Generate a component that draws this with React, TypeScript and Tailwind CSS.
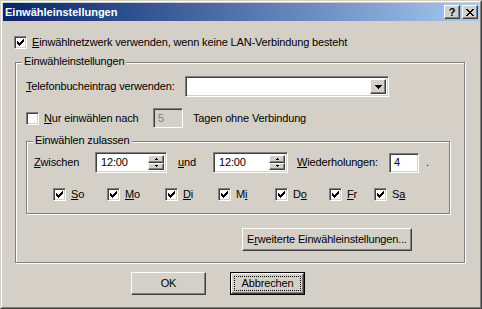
import React from 'react';

const raised =
  'border border-t-white border-l-white border-r-[#404040] border-b-[#404040] shadow-[inset_-1px_-1px_0_#808080]';
const sunken =
  'border border-t-[#808080] border-l-[#808080] border-r-white border-b-white shadow-[inset_1px_1px_0_#404040,inset_-1px_-1px_0_#d4d0c8]';
const etched = 'relative border border-[#808080] shadow-[inset_1px_1px_0_#fff,1px_1px_0_#fff]';

function Check({ checked }: { checked?: boolean }) {
  return (
    <span className={`w-[13px] h-[13px] shrink-0 bg-white flex items-center justify-center ${sunken}`}>
      {checked && (
        <svg width="7" height="7" viewBox="0 0 7 7" shapeRendering="crispEdges">
          <rect x="0" y="2" width="1" height="3" fill="#000" />
          <rect x="1" y="3" width="1" height="3" fill="#000" />
          <rect x="2" y="4" width="1" height="3" fill="#000" />
          <rect x="3" y="3" width="1" height="3" fill="#000" />
          <rect x="4" y="2" width="1" height="3" fill="#000" />
          <rect x="5" y="1" width="1" height="3" fill="#000" />
          <rect x="6" y="0" width="1" height="3" fill="#000" />
        </svg>
      )}
    </span>
  );
}

function Legend({ children }: { children: React.ReactNode }) {
  return (
    <span className="absolute left-[6px] -top-[8px] px-[2px] bg-[#d4d0c8] leading-[13px]">{children}</span>
  );
}

function SpinBox({ value, width }: { value: string; width: string }) {
  return (
    <div className={`${width} h-[21px] bg-white flex p-[2px] ${sunken}`}>
      <span className="flex-1 pl-[3px] flex items-center">{value}</span>
      <div className="w-[16px] flex flex-col">
        <div className={`h-[9px] bg-[#d4d0c8] flex items-center justify-center ${raised}`}>
          <svg width="3" height="2" viewBox="0 0 3 2" shapeRendering="crispEdges">
            <rect x="1" y="0" width="1" height="1" fill="#000" />
            <rect x="0" y="1" width="3" height="1" fill="#000" />
          </svg>
        </div>
        <div className={`h-[8px] bg-[#d4d0c8] flex items-center justify-center ${raised}`}>
          <svg width="3" height="2" viewBox="0 0 3 2" shapeRendering="crispEdges">
            <rect x="0" y="0" width="3" height="1" fill="#000" />
            <rect x="1" y="1" width="1" height="1" fill="#000" />
          </svg>
        </div>
      </div>
    </div>
  );
}

function Day({ label, width }: { label: React.ReactNode; width: string }) {
  return (
    <div className={`${width} flex items-center`}>
      <Check checked />
      <span className="ml-[5px]">{label}</span>
    </div>
  );
}

export default function App() {
  return (
    <div className="w-[482px] h-[309px] bg-[#d4d0c8] border border-t-[#d4d0c8] border-l-[#d4d0c8] border-r-[#404040] border-b-[#404040] text-[11px] leading-[13px] text-black font-['Liberation_Sans',Arial,sans-serif]">
      <div className="h-full border border-t-white border-l-white border-r-[#808080] border-b-[#808080] p-[1px] flex flex-col">
        {/* title bar */}
        <div className="h-[18px] shrink-0 bg-linear-to-r from-[#0a246a] to-[#a6caf0] flex items-center pl-[2px] pr-[1px]">
          <span className="flex-1 font-bold text-white text-[11px]">Einwähleinstellungen</span>
          <div className={`w-[16px] h-[14px] bg-[#d4d0c8] flex items-center justify-center ${raised}`}>
            <span className="font-bold text-[11px] leading-none">?</span>
          </div>
          <div className={`ml-[2px] w-[16px] h-[14px] bg-[#d4d0c8] flex items-center justify-center ${raised}`}>
            <svg width="8" height="7" viewBox="0 0 8 7" shapeRendering="crispEdges">
              <path d="M0 0h2v1h-2zM6 0h2v1h-2zM1 1h2v1h-2zM5 1h2v1h-2zM2 2h4v1h-4zM3 3h2v1h-2zM2 4h4v1h-4zM1 5h2v1h-2zM5 5h2v1h-2zM0 6h2v1h-2zM6 6h2v1h-2z" fill="#000" />
            </svg>
          </div>
        </div>

        {/* body */}
        <div className="flex flex-col tracking-[-0.15px]">
          <div className="mt-[15px] ml-[11px] h-[13px] flex items-center">
            <Check checked />
            <span className="ml-[5px]">
              <u>E</u>inwählnetzwerk verwenden, wenn keine LAN-Verbindung besteht
            </span>
          </div>

          <div className={`mt-[13px] ml-[12px] w-[450px] h-[201px] ${etched}`}>
            <Legend>Einwähleinstellungen</Legend>
            <div className="flex flex-col pl-[10px]">
              <div className="mt-[13px] h-[21px] flex items-center">
                <span className="w-[159px]">
                  <u>T</u>elefonbucheintrag verwenden:
                </span>
                <div className={`w-[204px] h-[21px] bg-white flex justify-end p-[2px] ${sunken}`}>
                  <div className={`w-[16px] h-full bg-[#d4d0c8] flex items-center justify-center ${raised}`}>
                    <svg width="7" height="4" viewBox="0 0 7 4" shapeRendering="crispEdges">
                      <path d="M0 0h7v1h-7zM1 1h5v1h-5zM2 2h3v1h-3zM3 3h1v1h-1z" fill="#000" />
                    </svg>
                  </div>
                </div>
              </div>

              <div className="mt-[11px] h-[20px] flex items-center">
                <div className="w-[127px] flex items-center">
                  <Check />
                  <span className="ml-[5px]">
                    <u>N</u>ur einwählen nach
                  </span>
                </div>
                <div className={`w-[30px] h-[20px] bg-[#d4d0c8] text-[#808080] flex items-center pl-[4px] ${sunken}`}>
                  5
                </div>
                <span className="ml-[10px]">Tagen ohne Verbindung</span>
              </div>

              <div className={`mt-[13px] w-[424px] h-[73px] ${etched}`}>
                <Legend>Einwählen zulassen</Legend>
                <div className="flex flex-col pl-[7px]">
                  <div className="mt-[10px] h-[21px] flex items-center">
                    <span className="w-[61px]">
                      <u>Z</u>wischen
                    </span>
                    <SpinBox value="12:00" width="w-[72px]" />
                    <span className="ml-[11px] w-[35px]">
                      <u>u</u>nd
                    </span>
                    <SpinBox value="12:00" width="w-[75px]" />
                    <span className="ml-[9px] w-[92px]">
                      <u>W</u>iederholungen:
                    </span>
                    <div className={`w-[30px] h-[20px] bg-white flex items-center pl-[4px] ${sunken}`}>4</div>
                    <span className="ml-[7px]">.</span>
                  </div>

                  <div className="mt-[15px] ml-[19px] h-[13px] flex items-center">
                    <Day width="w-[54px]" label={<><u>S</u>o</>} />
                    <Day width="w-[58px]" label={<><u>M</u>o</>} />
                    <Day width="w-[53px]" label={<><u>D</u>i</>} />
                    <Day width="w-[57px]" label={<>M<u>i</u></>} />
                    <Day width="w-[54px]" label={<>D<u>o</u></>} />
                    <Day width="w-[45px]" label={<><u>F</u>r</>} />
                    <Day width="w-[40px]" label={<>S<u>a</u></>} />
                  </div>
                </div>
              </div>

              <div className={`mt-[14px] ml-[216px] w-[170px] h-[23px] bg-[#d4d0c8] flex items-center justify-center ${raised}`}>
                <span>
                  E<u>r</u>weiterte Einwähleinstellungen...
                </span>
              </div>
            </div>
          </div>

          <div className="mt-[9px] ml-[128px] flex">
            <div className={`w-[75px] h-[23px] bg-[#d4d0c8] flex items-center justify-center ${raised}`}>OK</div>
            <div className="ml-[24px] w-[75px] h-[23px] border border-black">
              <div className={`w-full h-full bg-[#d4d0c8] flex items-center justify-center ${raised}`}>
                <span className="w-[67px] h-[15px] border border-dotted border-black flex items-center justify-center">
                  Abbrechen
                </span>
              </div>
            </div>
          </div>
        </div>
      </div>
    </div>
  );
}
